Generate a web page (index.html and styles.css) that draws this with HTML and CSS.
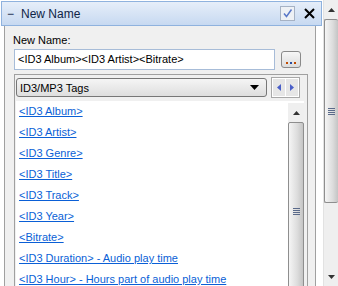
FILE: index.html
```html
<!DOCTYPE html>
<html lang="en">
<head>
  <meta charset="UTF-8">
  <title>New Name</title>
  <link rel="stylesheet" href="styles.css">
</head>
<body>

  <div class="page">
    <div class="main">
      <div class="header">
        <span class="collapse">&minus;</span>
        <span class="title">New Name</span>
        <span class="check">
          <svg width="11" height="11" viewBox="0 0 11 11"><path d="M2 5.5 L4.5 8.5 L9.5 1.5" fill="none" stroke="#5a78c8" stroke-width="1.5"/></svg>
        </span>
        <span class="close">
          <svg width="11" height="11" viewBox="0 0 11 11"><path d="M1 1 L10 10 M10 1 L1 10" stroke="#000" stroke-width="2"/></svg>
        </span>
      </div>

      <div class="panel">
        <div class="label">New Name:</div>
        <div class="name-row">
          <div class="textbox">&lt;ID3 Album&gt;&lt;ID3 Artist&gt;&lt;Bitrate&gt;</div>
          <div class="dots-btn">
            <svg width="11" height="3" viewBox="0 0 11 3"><rect x="0" y="0" width="2" height="2" fill="#c04a00"/><rect x="4" y="0" width="2" height="2" fill="#2a4fa0"/><rect x="8" y="0" width="2" height="2" fill="#c04a00"/></svg>
          </div>
        </div>

        <div class="group">
          <div class="combo-row">
            <div class="combo">
              <span>ID3/MP3 Tags</span>
              <svg width="9" height="5" viewBox="0 0 9 5"><path d="M0 0 H9 L4.5 5 Z" fill="#000"/></svg>
            </div>
            <div class="nav">
              <span class="nav-btn"><svg width="4" height="7" viewBox="0 0 4 7"><path d="M4 0 V7 L0 3.5 Z" fill="#4a5fc8"/></svg></span>
              <span class="nav-btn"><svg width="4" height="7" viewBox="0 0 4 7"><path d="M0 0 V7 L4 3.5 Z" fill="#4a5fc8"/></svg></span>
            </div>
          </div>

          <div class="list">
            <ul class="items">
              <li><a href="#">&lt;ID3 Album&gt;</a></li>
              <li><a href="#">&lt;ID3 Artist&gt;</a></li>
              <li><a href="#">&lt;ID3 Genre&gt;</a></li>
              <li><a href="#">&lt;ID3 Title&gt;</a></li>
              <li><a href="#">&lt;ID3 Track&gt;</a></li>
              <li><a href="#">&lt;ID3 Year&gt;</a></li>
              <li><a href="#">&lt;Bitrate&gt;</a></li>
              <li><a href="#">&lt;ID3 Duration&gt; - Audio play time</a></li>
              <li><a href="#">&lt;ID3 Hour&gt; - Hours part of audio play time</a></li>
            </ul>
            <div class="vscroll inner">
              <div class="arrow-up"><svg width="7" height="4" viewBox="0 0 7 4"><path d="M0 4 H7 L3.5 0 Z" fill="#333"/></svg></div>
              <div class="thumb tall">
                <span class="grip"></span>
              </div>
            </div>
          </div>
        </div>
      </div>
    </div>

    <div class="vscroll outer">
      <div class="arrow-up"><svg width="7" height="4" viewBox="0 0 7 4"><path d="M0 4 H7 L3.5 0 Z" fill="#333"/></svg></div>
      <div class="thumb short">
        <span class="grip"></span>
      </div>
      <div class="track"></div>
      <div class="arrow-down"><svg width="7" height="4" viewBox="0 0 7 4"><path d="M0 0 H7 L3.5 4 Z" fill="#333"/></svg></div>
    </div>
  </div>

</body>
</html>
```

FILE: styles.css
```css
body {
  margin: 0;
  background: #fff;
  font-family: 'Liberation Sans', Arial, sans-serif;
  font-size: 11px;
  color: #000;
  overflow: hidden;
}

.page {
  display: flex;
  height: 286px;
  overflow: hidden;
}

.main {
  width: 324px;
  display: flex;
  flex-direction: column;
}

.header {
  height: 23px;
  margin: 1px 1px 0 1px;
  border: 1px solid #8fb2de;
  background: linear-gradient(#e6eef9, #c7d9f1);
  display: flex;
  align-items: center;
  color: #0f2447;
  font-size: 12px;
}

.collapse {
  width: 10px;
  margin-left: 5px;
}

.title {
  margin-left: 4px;
  flex: 1;
}

.check {
  width: 13px;
  height: 13px;
  background: #eef1f5;
  border: 1px solid #a6b2c4;
  display: flex;
  align-items: center;
  justify-content: center;
}

.close {
  margin: 0 6px 0 9px;
  display: flex;
}

.panel {
  flex: 1;
  margin: 0 7px 0 4px;
  border-left: 1px solid #a0a0a0;
  border-right: 1px solid #a0a0a0;
  background: #f0f0f0;
  padding: 8px 0 0 8px;
  overflow: hidden;
}

.label {
  line-height: 13px;
  margin-bottom: 2px;
}

.name-row {
  display: flex;
  align-items: center;
  gap: 6px;
}

.textbox {
  width: 256px;
  height: 19px;
  line-height: 19px;
  padding-left: 3px;
  background: #fff;
  border: 1px solid #a7bcd8;
  margin-left: 1px;
}

.dots-btn {
  width: 20px;
  height: 17px;
  border: 1px solid #8a8a8a;
  border-radius: 3px;
  background: linear-gradient(#f7f7f7, #dcdcdc);
  display: flex;
  align-items: flex-end;
  justify-content: center;
  padding-bottom: 2px;
  box-sizing: border-box;
}

.group {
  margin: 4px 0 0 1px;
  width: 288px;
  border: 1px solid #a0a0a0;
  border-bottom: none;
  padding: 2px 3px 0 1px;
  height: 220px;
}

.combo-row {
  display: flex;
  align-items: center;
  gap: 4px;
}

.combo {
  width: 251px;
  height: 19px;
  box-sizing: border-box;
  border: 1px solid #777;
  border-radius: 3px;
  background: linear-gradient(#f5f5f5, #dedede);
  display: flex;
  align-items: center;
  justify-content: space-between;
  padding: 0 7px 0 3px;
}

.nav {
  display: flex;
  border: 1px solid #a8a8a8;
  padding: 1px;
  gap: 1px;
  background: #fff;
}

.nav-btn {
  width: 12px;
  height: 17px;
  background: #e6e6e6;
  display: flex;
  align-items: center;
  justify-content: center;
}

.list {
  display: flex;
  margin-top: 3px;
  background: #fff;
  height: 200px;
}

.items {
  list-style: none;
  margin: 0;
  padding: 0 0 0 3px;
  flex: 1;
}

.items li {
  height: 21px;
  line-height: 21px;
  white-space: nowrap;
}

.items a {
  color: #0a5fd6;
}

.vscroll {
  display: flex;
  flex-direction: column;
  align-items: stretch;
  background: #efefef;
}

.vscroll.inner {
  width: 16px;
  margin-top: 2px;
}

.vscroll.outer {
  width: 14px;
  border-left: 1px solid #e2e2e2;
}

.arrow-up,
.arrow-down {
  height: 19px;
  flex-shrink: 0;
  display: flex;
  align-items: center;
  justify-content: center;
}

.thumb {
  flex-shrink: 0;
  border: 1px solid #8e8e8e;
  border-radius: 2px;
  background: linear-gradient(90deg, #f5f5f5, #dcdcdc 60%, #c4c4c4);
  display: flex;
  align-items: center;
  justify-content: center;
}

.thumb.tall {
  height: 240px;
  align-items: flex-start;
}

.thumb.tall .grip {
  margin-top: 85px;
}

.thumb.short {
  height: 182px;
  border-right: none;
}

.track {
  flex: 1;
}

.grip {
  width: 7px;
  height: 7px;
  background: repeating-linear-gradient(#5a6a8a 0 1px, transparent 1px 2px);
}
```
